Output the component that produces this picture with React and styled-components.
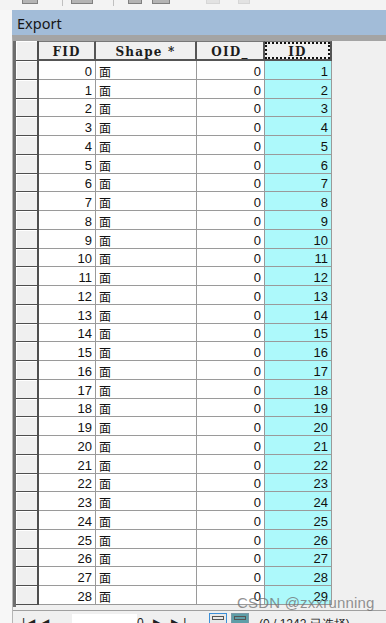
import React from "react";
import styled, { createGlobalStyle } from "styled-components";

const Global = createGlobalStyle`
  html, body { margin: 0; padding: 0; background: #f0f0f0; }
  body { width: 386px; height: 623px; overflow: hidden; }
`;

const Page = styled.div`
  position: relative;
  width: 386px;
  height: 623px;
  overflow: hidden;
  display: flex;
  flex-direction: column;
  background: #f0f0f0;
  font-family: "Liberation Sans", Arial, sans-serif;
`;

const Toolbar = styled.div`
  height: 10px;
  flex: none;
  background: #f3f3f3;
  display: flex;
  align-items: flex-end;
  padding-left: 20px;
  box-sizing: border-box;
`;

const ToolIcon = styled.div`
  width: ${(p) => p.$w}px;
  height: 3px;
  margin-left: ${(p) => p.$ml}px;
  margin-bottom: 6px;
  background: ${(p) => (p.$faint ? "#e2e2e2" : "#b4b4b4")};
  border: 1px solid ${(p) => (p.$faint ? "#d6d6d6" : "#808080")};
  border-top: none;
`;

const ToolSep = styled.div`
  width: 1px;
  height: 6px;
  margin-left: ${(p) => p.$ml}px;
  margin-bottom: 4px;
  background: #c0c0c0;
`;

const Body = styled.div`
  flex: 1;
  display: flex;
  min-height: 0;
`;

const LeftPad = styled.div`
  width: 12px;
  flex: none;
  background: #f7f7f7;
`;

const Panel = styled.div`
  flex: 1;
  display: flex;
  flex-direction: column;
  min-width: 0;
`;

const TitleBar = styled.div`
  height: 25px;
  flex: none;
  background: #a2bcd8;
  display: flex;
  align-items: center;
  padding-left: 5px;
  font-family: "Noto Sans", "Open Sans", sans-serif;
  font-size: 14.5px;
  color: #161616;
  box-sizing: border-box;
  padding-top: 1px;
`;

const GridArea = styled.div`
  flex: 1;
  display: flex;
  flex-direction: column;
  border-top: 6px solid #a4a4a4;
  border-left: 1px solid #b5b5b5;
  background: #f0f0f0;
  min-height: 0;
`;

const GridFrame = styled.div`
  border-left: 3px solid #6d6d6d;
  display: flex;
  flex-direction: column;
  height: 566px;
  flex: none;
  overflow: hidden;
`;

const Grid = styled.div`
  display: grid;
  grid-template-columns: 23px 57px 101px 68px 67px;
  grid-template-rows: 20px;
  grid-auto-rows: 18.75px;
  width: 316px;
`;

const Cell = styled.div`
  box-sizing: border-box;
  overflow: hidden;
  white-space: nowrap;
  display: flex;
  align-items: center;
`;

const Selector = styled(Cell)`
  background: #f0f0f0;
  border-right: 2px solid #4e4e4e;
  border-bottom: 1px solid #4e4e4e;
  box-shadow: inset 1px 1px 0 #ffffff;
`;

const HeaderCell = styled(Cell)`
  background: #f0f0f0;
  border-right: 2px solid #555;
  border-bottom: 2px solid #555;
  border-top: 1px solid #777;
  justify-content: center;
  padding-top: 3px;
  font-family: "DejaVu Serif", "Liberation Serif", serif;
  font-weight: bold;
  font-size: 12px;
  letter-spacing: 1.2px;
  color: #1c1c1c;
  position: relative;
  ${(p) =>
    p.$focus &&
    `
    &::after {
      content: "";
      position: absolute;
      left: 0; top: 0; right: 0; bottom: 0;
      border: 2px dotted #111;
    }
  `}
`;

const DataCell = styled(Cell)`
  background: ${(p) => (p.$cyan ? "#adf9fb" : "#ffffff")};
  border-right: 1px solid #9a9a9a;
  border-bottom: 1px solid #9a9a9a;
  justify-content: ${(p) => (p.$left ? "flex-start" : "flex-end")};
  padding: ${(p) => (p.$left ? "3px 0 0 3px" : "3px 3px 0 0")};
  font-family: ${(p) =>
    p.$left
      ? '"Noto Sans CJK SC", "Noto Sans CJK JP", sans-serif'
      : '"Liberation Sans", Arial, sans-serif'};
  font-size: ${(p) => (p.$left ? "12px" : "13px")};
  color: #111;
`;

const StatusBar = styled.div`
  flex: 1;
  border-top: 1px solid #a0a0a0;
  margin-top: 3px;
  display: flex;
  align-items: flex-start;
  padding-top: 5px;
  font-family: "Liberation Sans", Arial, sans-serif;
  font-size: 12px;
  color: #222;
`;

const NavText = styled.span`
  margin-left: 9px;
  width: 50px;
  letter-spacing: 1px;
`;

const NumBox = styled.div`
  width: 65px;
  height: 14px;
  background: #ffffff;
  margin-top: -2px;
`;

const NavText2 = styled.span`
  width: 70px;
  letter-spacing: 3px;
`;

const ViewBtn = styled.div`
  width: 18px;
  height: 12px;
  box-sizing: border-box;
  margin-top: -3px;
  margin-left: ${(p) => p.$ml}px;
  border: 1px solid ${(p) => (p.$active ? "#3c8fd8" : "#7a9aa8")};
  background: ${(p) => (p.$active ? "#e8e8e8" : "#5e9ea8")};
  padding: 2px;
  &::after {
    content: "";
    display: block;
    height: 2px;
    border: 1px solid #555;
  }
`;

const SelText = styled.span`
  margin-left: 10px;
`;

const Watermark = styled.div`
  position: absolute;
  left: 237px;
  top: 594px;
  font-family: "Liberation Sans", Arial, sans-serif;
  font-size: 15px;
  color: rgba(110, 110, 110, 0.75);
  white-space: nowrap;
  letter-spacing: 0.2px;
`;

const rows = Array.from({ length: 29 }, (_, i) => i);

export default function App() {
  return (
    <Page>
      <Global />
      <Toolbar>
        <ToolIcon $w={14} $ml={2} />
        <ToolSep $ml={24} />
        <ToolIcon $w={20} $ml={8} />
        <ToolSep $ml={20} />
        <ToolIcon $w={12} $ml={14} />
        <ToolIcon $w={16} $ml={10} />
        <ToolIcon $w={12} $ml={36} $faint />
        <ToolIcon $w={10} $ml={18} $faint />
      </Toolbar>
      <Body>
        <LeftPad />
        <Panel>
          <TitleBar>Export</TitleBar>
          <GridArea>
            <GridFrame>
              <Grid>
                <Selector />
                <HeaderCell>FID</HeaderCell>
                <HeaderCell>Shape *</HeaderCell>
                <HeaderCell>OID_</HeaderCell>
                <HeaderCell $focus>ID</HeaderCell>
                {rows.map((i) => (
                  <React.Fragment key={i}>
                    <Selector />
                    <DataCell>{i}</DataCell>
                    <DataCell $left>面</DataCell>
                    <DataCell>0</DataCell>
                    <DataCell $cyan>{i + 1}</DataCell>
                  </React.Fragment>
                ))}
              </Grid>
            </GridFrame>
            <StatusBar>
              <NavText>|◀ ◀</NavText>
              <NumBox />
              <NavText2>0 ▶ ▶|</NavText2>
              <ViewBtn $active $ml={2} />
              <ViewBtn $ml={4} />
              <SelText>(0 / 1242 已选择)</SelText>
            </StatusBar>
          </GridArea>
        </Panel>
      </Body>
      <Watermark>CSDN @zxxrunning</Watermark>
    </Page>
  );
}
